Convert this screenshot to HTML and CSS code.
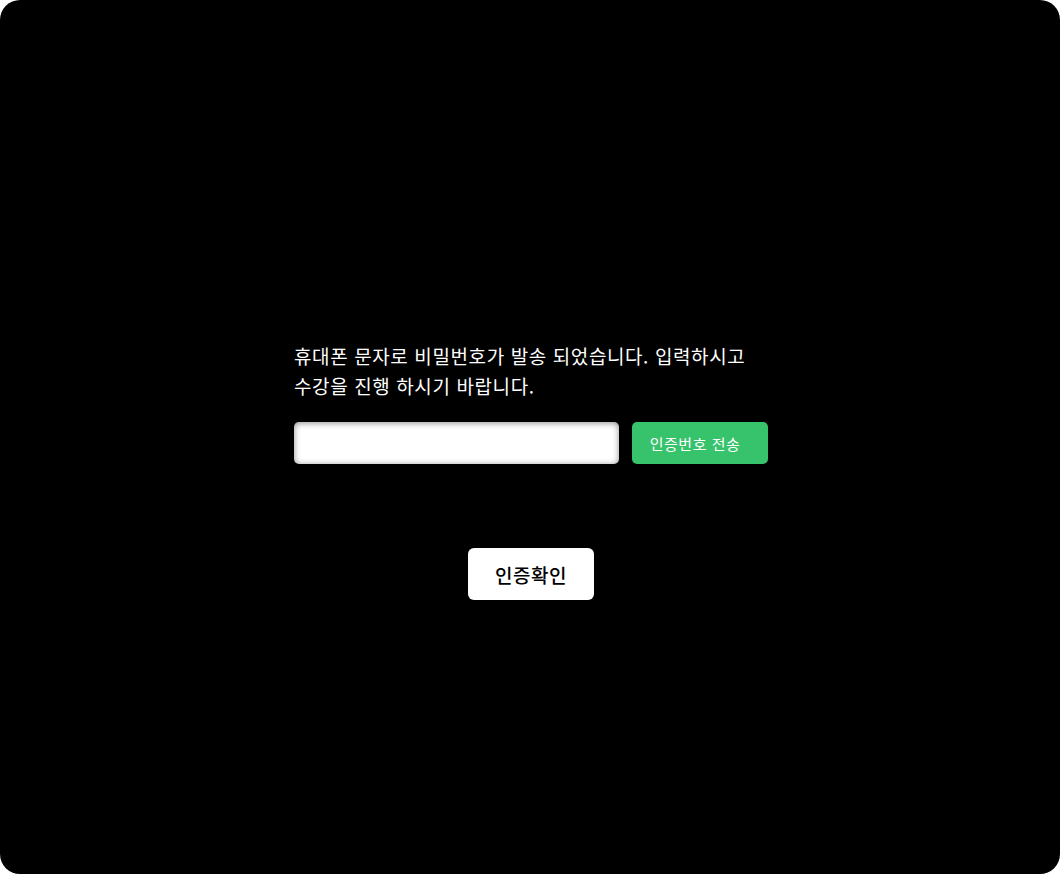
FILE: index.html
```html
<!DOCTYPE html>
<html lang="ko">
<head>
<meta charset="utf-8">
<title>인증</title>
<link rel="stylesheet" href="styles.css">
</head>
<body>
<div class="screen">
  <div class="content">
    <p class="message">휴대폰 문자로 비밀번호가 발송 되었습니다. 입력하시고<br>수강을 진행 하시기 바랍니다.</p>
    <div class="row">
      <input class="code-input" type="text" aria-label="인증번호">
      <button class="send-btn" type="button">인증번호 전송</button>
    </div>
    <div class="confirm-wrap">
      <button class="confirm-btn" type="button">인증확인</button>
    </div>
  </div>
</div>
</body>
</html>
```
FILE: styles.css
```css
html, body {
  margin: 0;
  padding: 0;
  background: #ffffff;
}
body {
  font-family: "Noto Sans CJK KR", "Noto Sans", sans-serif;
}
.screen {
  width: 1060px;
  height: 874px;
  background: #000000;
  border-radius: 20px;
  overflow: hidden;
}
.content {
  width: 474px;
  margin-left: 294px;
  padding-top: 341px;
}
.message {
  margin: 0;
  color: #ffffff;
  font-size: 19px;
  letter-spacing: 0.6px;
  line-height: 30px;
  font-weight: 400;
}
.row {
  display: flex;
  gap: 13px;
  margin-top: 21px;
  height: 42px;
}
.code-input {
  flex: 0 0 325px;
  height: 42px;
  box-sizing: border-box;
  border: none;
  border-radius: 5px;
  background: #ffffff;
  box-shadow: inset 0 1px 6px rgba(0, 0, 0, 0.45);
  padding: 0 12px;
  font-size: 15px;
  outline: none;
}
.send-btn {
  flex: 0 0 136px;
  height: 42px;
  border: none;
  border-radius: 5px;
  background: #37c26c;
  color: #ffffff;
  font-family: inherit;
  font-size: 15px;
  letter-spacing: 0.5px;
  font-weight: 400;
  padding: 0 10px 0 0;
}
.confirm-wrap {
  display: flex;
  justify-content: center;
  margin-top: 84px;
}
.confirm-btn {
  width: 126px;
  height: 52px;
  border: none;
  border-radius: 6px;
  background: #ffffff;
  color: #000000;
  font-family: inherit;
  font-size: 19px;
  letter-spacing: 0.5px;
  font-weight: 500;
  padding: 0;
}
```
